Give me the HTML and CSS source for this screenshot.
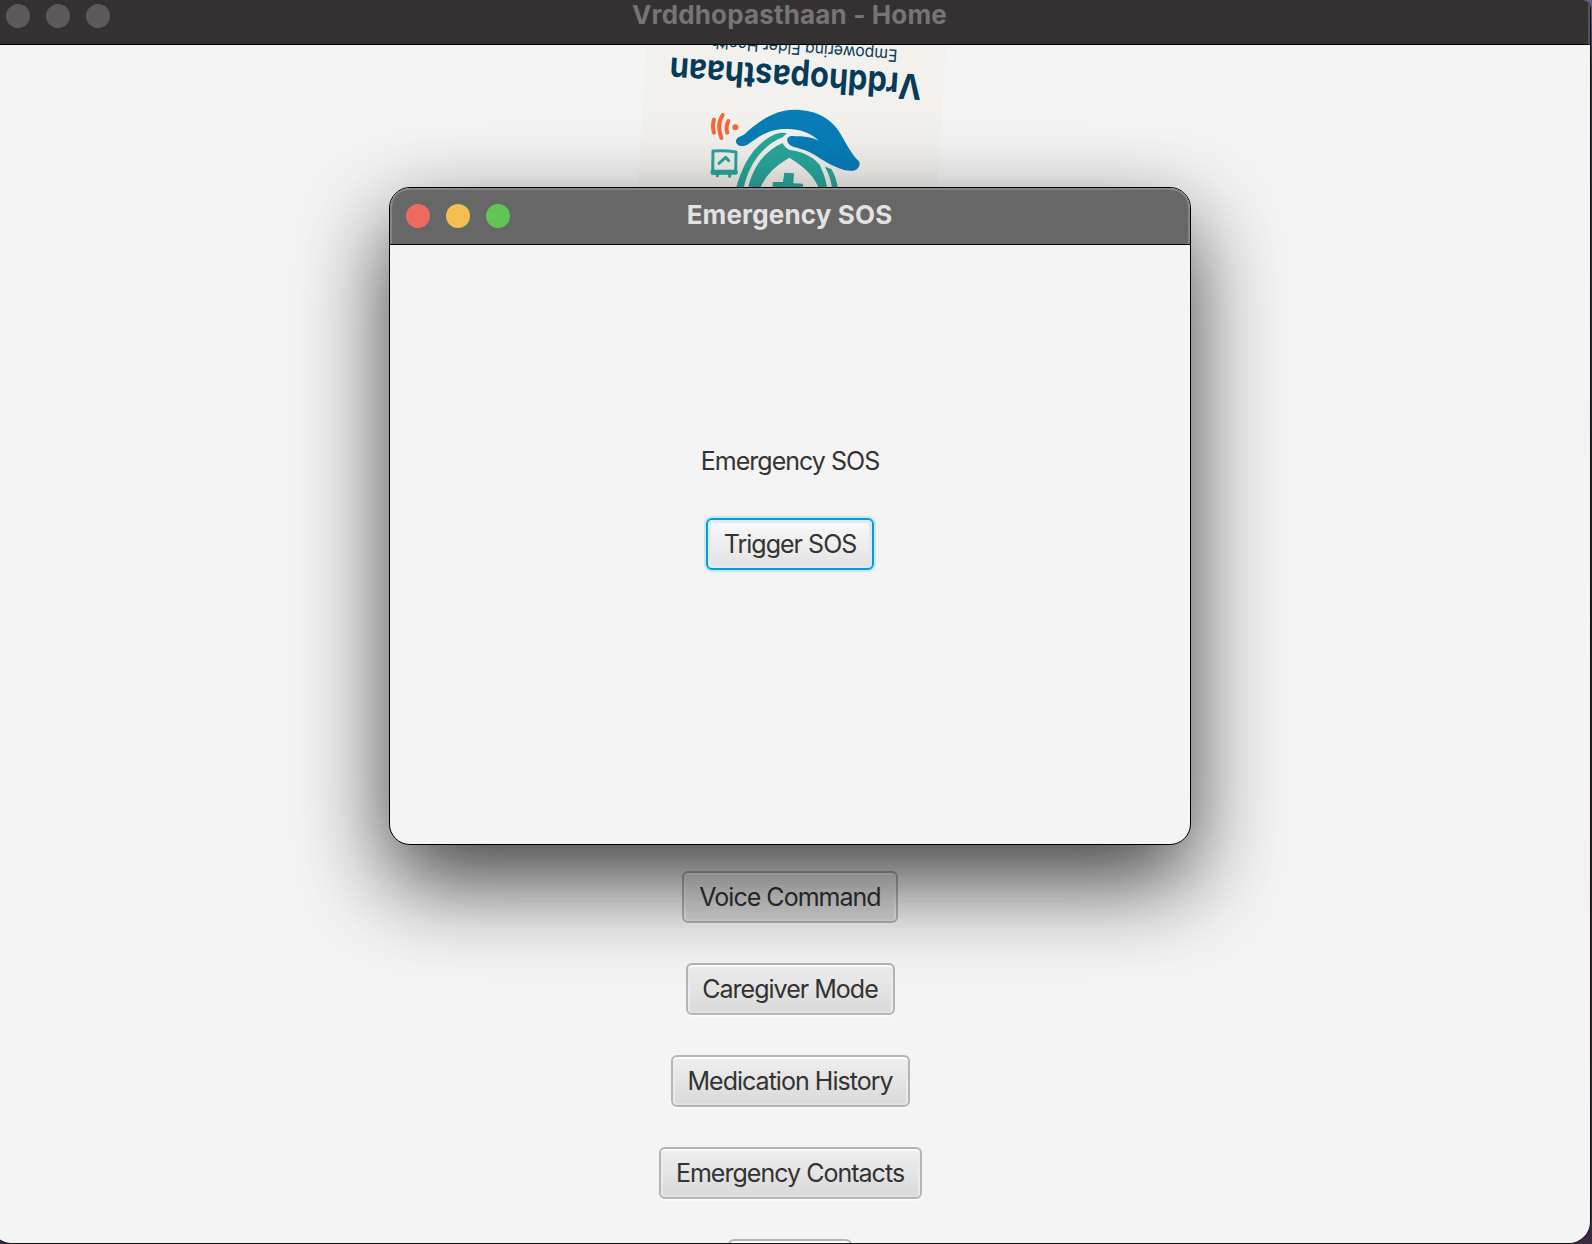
FILE: index.html
```html
<!DOCTYPE html>
<html lang="en">
<head>
<meta charset="utf-8">
<title>Vrddhopasthaan - Home</title>
<link rel="stylesheet" href="styles.css">
</head>
<body>
<main class="window home">
  <header class="titlebar home-bar">
    <div class="lights"><i class="light"></i><i class="light"></i><i class="light"></i></div>
    <h1 class="title home-title">Vrddhopasthaan - Home</h1>
  </header>
  <div class="home-content">
    <svg class="logo" viewBox="0 15 960 435" role="img" aria-label="Vrddhopasthaan logo">
      <path fill="#f3f1ed" d="M50 15H948L922 450H22Z"/>
      <text class="logo-tagline" transform="translate(803 29) rotate(184.1)" textLength="562" lengthAdjust="spacingAndGlyphs">Empowering Elder Health</text>
      <text class="logo-name" transform="translate(877 104) rotate(183.9)" textLength="758" lengthAdjust="spacingAndGlyphs">Vrddhopasthaan</text>
      <g fill="none" stroke="#f4683a" stroke-width="12" stroke-linecap="round">
        <path d="M252 239Q246 258 252 278"/>
        <path d="M278 225C262 250 267 272 274 294"/>
        <path d="M295 243Q286 262 292 278"/>
      </g>
      <circle cx="316" cy="262" r="9" fill="#f4683a"/>
      <g fill="none" stroke="#29a79c" stroke-width="9" stroke-linejoin="round" stroke-linecap="round">
        <path d="M249 333Q283 330 318 336L317 397L248 400Z"/>
        <path d="M249 397H316" stroke-width="15"/>
        <path d="M262 402V407M299 404V409"/>
        <path d="M267 370L287 352L296 362"/>
      </g>
      <path fill="#29a79c" d="M317 450C334 380 370 310 437 282Q455 276 471 280L458 292C400 315 355 370 340 450Z"/>
      <path fill="#29a79c" d="M353 450C365 390 398 335 458 309Q463 323 480 330C527 335 570 364 574 386Q586 410 593 450H568Q552 397 478 353Q407 393 389 450Z"/>
      <path fill="#29a79c" d="M585 380L604 387Q619 412 625 450H607Q602 410 585 380Z"/>
      <path fill="#29a79c" d="M463 398L492 400L490 430L519 431V450H428V426H459Z"/>
      <path fill="#087db8" d="M318 301C320 292 332 289 342 284C386 242 437 209 492 209C560 209 606 237 632 282C649 311 663 342 688 365C692 382 679 394 661 392C640 392 621 382 603 374C573 359 555 342 523 330L490 320C474 315 469 303 473 294C479 284 498 290 512 289C530 290 549 293 566 302C548 285 522 270 486 268C445 263 414 274 389 289L352 314C338 322 316 319 318 301Z"/>
    </svg>
    <nav class="menu">
      <button class="btn voice">Voice Command</button>
      <button class="btn caregiver">Caregiver Mode</button>
      <button class="btn history">Medication History</button>
      <button class="btn contacts">Emergency Contacts</button>
      <button class="btn last"></button>
    </nav>
  </div>
</main>
<section class="window dialog">
  <header class="titlebar dialog-bar">
    <div class="lights"><i class="light close"></i><i class="light minimize"></i><i class="light zoom"></i></div>
    <h2 class="title dialog-title">Emergency SOS</h2>
  </header>
  <div class="dialog-content">
    <p class="label">Emergency SOS</p>
    <button class="btn trigger">Trigger SOS</button>
  </div>
</section>
</body>
</html>
```
FILE: styles.css
```css
* { box-sizing: border-box; }

body {
  margin: 0;
  width: 1592px;
  height: 1244px;
  overflow: hidden;
  position: relative;
  background: linear-gradient(#66619a, #37304d 60px, #201b2a 50%, #3a2a42);
  font-family: Inter, "Liberation Sans", sans-serif;
  color: #333;
}

.window { background: #f4f4f4; overflow: hidden; }

.home {
  width: 1601px;
  height: 1244px;
  margin-left: -10px;
  border-right: 1px solid #111;
  border-bottom: 1px solid #111;
  border-radius: 0 8px 22px 22px;
}

.titlebar {
  display: grid;
  grid-template-columns: 1fr auto 1fr;
  align-items: center;
  border-bottom: 1px solid #000;
}

.home-bar {
  height: 45px;
  padding: 0 15px 12px 16px;
  background: #353132;
  border-right: 2px solid #565354;
}

.lights { display: flex; gap: 16px; }
.light { width: 24px; height: 24px; border-radius: 50%; background: #5b595a; }
.close { background: #ee6a5f; }
.minimize { background: #f5bf4f; }
.zoom { background: #61c554; }

.title {
  margin: 0;
  font-size: 26px;
  line-height: 30px;
  padding-bottom: 2px;
  letter-spacing: 0.15px;
  font-weight: 700;
  white-space: nowrap;
  color: #e2e2e2;
}
.home-title { color: #767475; }

.home-content { display: flex; flex-direction: column; align-items: center; }

.logo { display: block; width: 320px; height: 145px; }
.logo text { fill: #063b5a; font-family: Inter, sans-serif; }
.logo-name { font-size: 105px; font-weight: 700; }
.logo-tagline { font-size: 51px; font-weight: 400; }

.menu {
  display: flex;
  flex-direction: column;
  align-items: center;
  gap: 40px;
  margin-top: 681px;
}

.btn {
  flex: none;
  height: 52px;
  padding: 0;
  border: 2px solid #b5b5b5;
  border-radius: 6px;
  background: linear-gradient(#efefef, #d9d9d9);
  box-shadow: inset 0 2px #fdfdfd, inset 2px 0 #ebebeb, inset -2px 0 #ebebeb, inset 0 -2px #e0e0e0, 0 2px #fafafa;
  font: 400 25px/30px Inter, "Liberation Sans", sans-serif;
  letter-spacing: -0.98px;
  white-space: nowrap;
  color: #333;
}
.voice { width: 216px; }
.caregiver { width: 209px; }
.history { width: 239px; }
.contacts { width: 263px; }
.last { width: 124px; }

.dialog {
  position: absolute;
  left: 389px;
  top: 187px;
  width: 802px;
  height: 658px;
  border: 1px solid #000;
  border-radius: 21px;
  box-shadow: 0 36px 90px rgba(0, 0, 0, .74);
}

.dialog-bar {
  height: 57px;
  padding: 0 17px 0 16px;
  background: #676767;
  box-shadow: inset 0 2px #858585, inset 2px 0 #858585, inset -2px 0 #858585;
  border-radius: 20px 20px 0 0;
}

.dialog-content {
  display: flex;
  flex-direction: column;
  align-items: center;
  gap: 41px;
  padding-top: 200px;
}

.label { margin: 0; font-size: 25px; line-height: 32px; letter-spacing: -0.98px; }

.trigger {
  width: 168px;
  border-color: #039ed3;
  background: linear-gradient(#fafafa, #e2e2e2);
  box-shadow: 0 0 0 2px #cde7f0, inset 0 0 0 3px #dcebf1;
}
```
